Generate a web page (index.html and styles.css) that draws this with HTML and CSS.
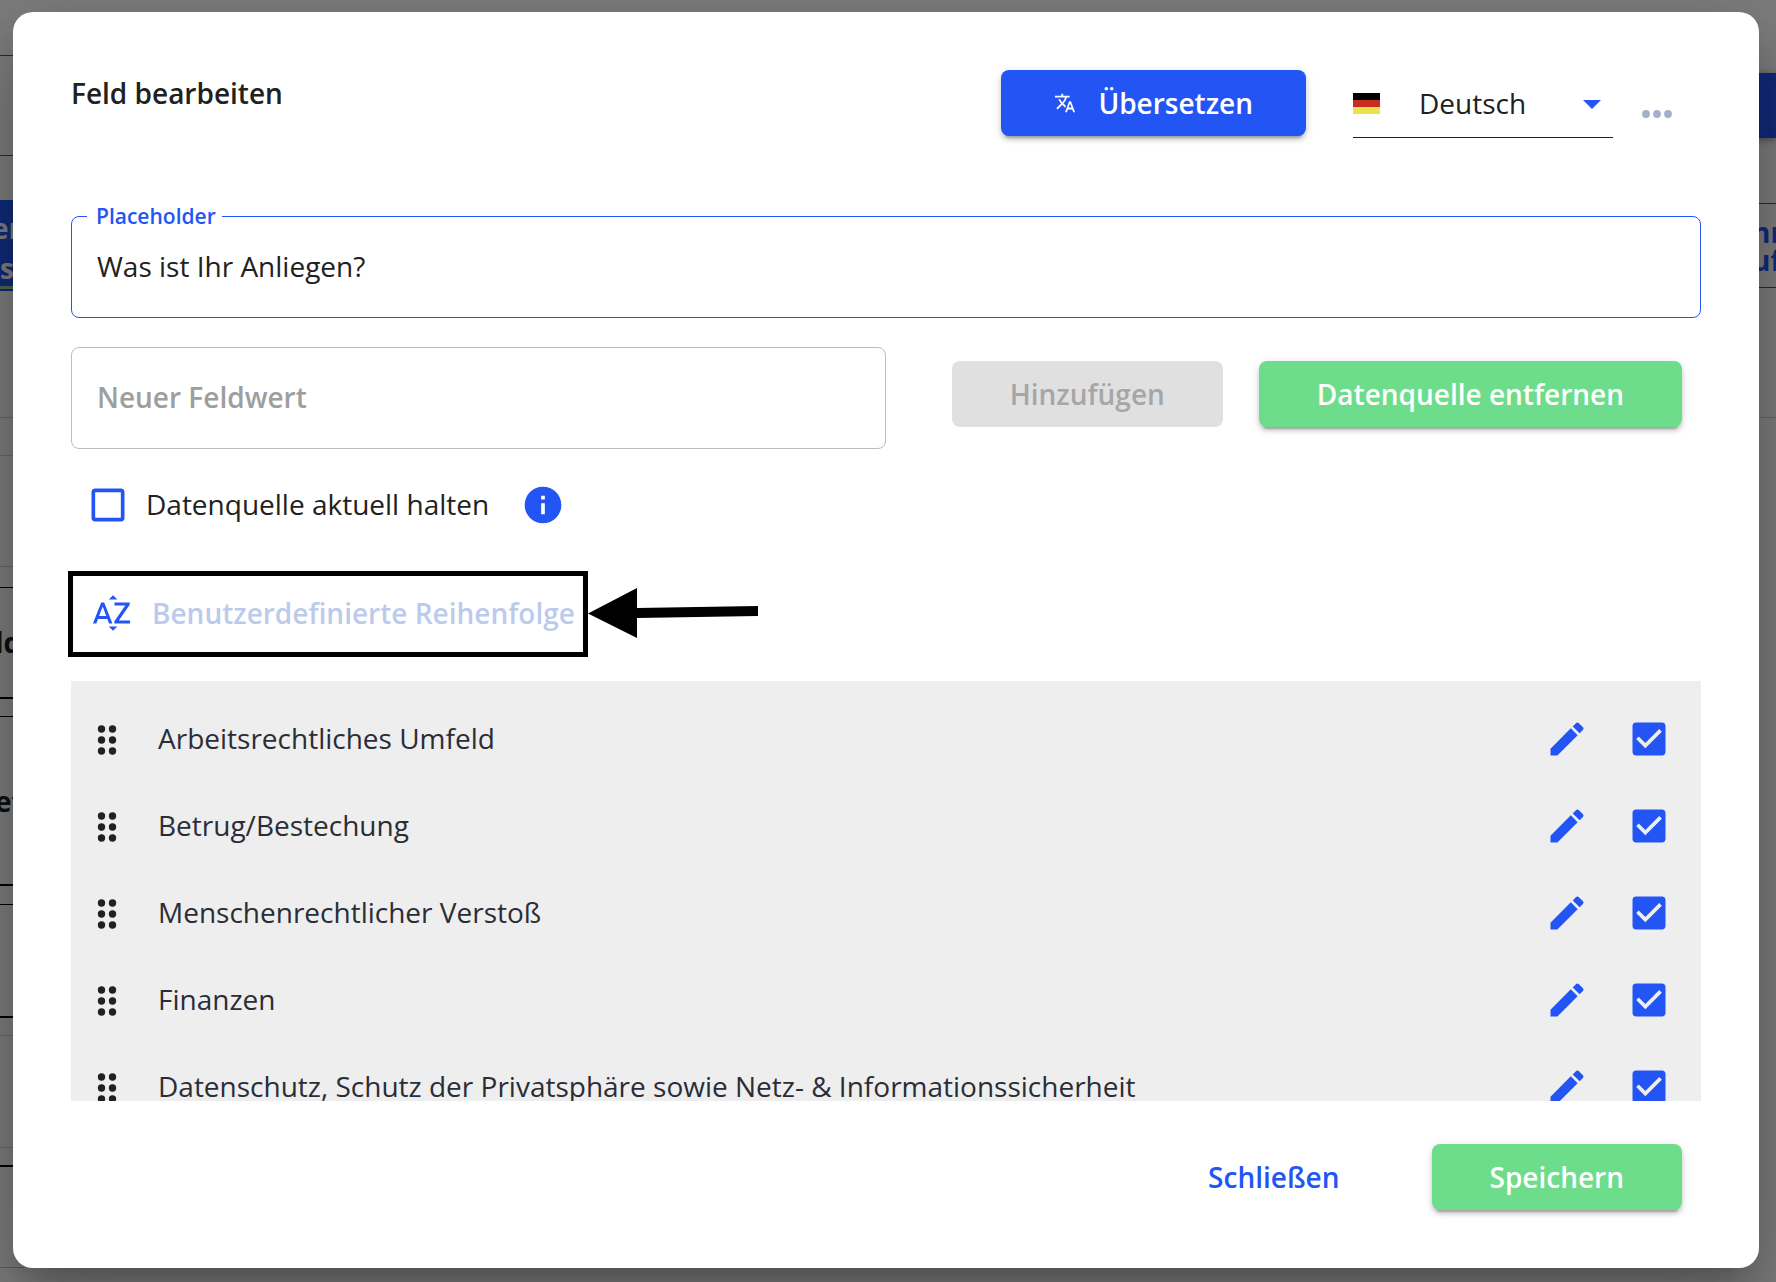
FILE: index.html
```html
<!DOCTYPE html>
<html lang="de">
<head>
<meta charset="utf-8">
<meta name="viewport" content="width=device-width, initial-scale=1">
<title>Feld bearbeiten</title>
<link rel="stylesheet" href="styles.css">
</head>
<body>
<svg class="sprite" aria-hidden="true">
  <symbol id="icon-drag" viewBox="0 0 24 32">
    <circle cx="6.500" cy="5" r="3.700"/><circle cx="17.500" cy="5" r="3.700"/>
    <circle cx="6.500" cy="16" r="3.700"/><circle cx="17.500" cy="16" r="3.700"/>
    <circle cx="6.500" cy="27" r="3.700"/><circle cx="17.500" cy="27" r="3.700"/>
  </symbol>
  <symbol id="icon-edit" viewBox="0 0 24 24">
    <path d="M3 17.250V21h3.750L17.810 9.940l-3.750-3.750L3 17.250zM20.710 7.040a1 1 0 0 0 0-1.410l-2.340-2.340a1 1 0 0 0-1.410 0l-1.830 1.830 3.750 3.750 1.830-1.830z"/>
  </symbol>
  <symbol id="icon-checked" viewBox="0 0 24 24">
    <path d="M19 3H5a2 2 0 0 0-2 2v14a2 2 0 0 0 2 2h14a2 2 0 0 0 2-2V5a2 2 0 0 0-2-2zm-9 14l-5-5 1.410-1.410L10 14.170l7.590-7.590L19 8l-9 9z"/>
  </symbol>
  <symbol id="icon-unchecked" viewBox="0 0 24 24">
    <path d="M19 5v14H5V5h14m0-2H5a2 2 0 0 0-2 2v14a2 2 0 0 0 2 2h14a2 2 0 0 0 2-2V5a2 2 0 0 0-2-2z"/>
  </symbol>
</svg>

<div class="page" aria-hidden="true">
  <div class="edge edge-left">
    <div class="left-title"></div>
    <div class="left-tab">er<br>st</div>
    <div class="left-gap"></div>
    <div class="left-card card-first">ld</div>
    <div class="left-card card-second">ef</div>
    <div class="left-card card-third"></div>
    <div class="left-card card-fourth"></div>
    <div class="left-rest"></div>
  </div>
  <div class="edge edge-right">
    <div class="right-button"></div>
    <div class="right-tab">hr<br>ufu</div>
    <div class="right-line"></div>
  </div>
</div>

<div class="backdrop">
  <main class="dialog" role="dialog" aria-labelledby="dialog-title">
    <header class="dialog-header">
      <h1 class="dialog-title" id="dialog-title">Feld bearbeiten</h1>
      <button class="button button-primary" type="button">
        <svg class="translate-icon" viewBox="0 0 24 24" aria-hidden="true"><path d="M12.870 15.070l-2.540-2.510.030-.030A17.520 17.520 0 0 0 14.070 6H17V4h-7V2H8v2H1v1.990h11.170C11.500 7.920 10.440 9.750 9 11.350 8.070 10.320 7.300 9.190 6.690 8h-2c.730 1.630 1.730 3.170 2.980 4.560l-5.090 5.020L4 19l5-5 3.110 3.110.760-2.040zM18.500 10h-2L12 22h2l1.120-3h4.750L21 22h2l-4.500-12zm-2.620 7l1.620-4.330L19.120 17h-3.240z"/></svg>
        Übersetzen
      </button>
      <div class="language">
        <svg class="flag" viewBox="0 0 27 21" aria-hidden="true"><path fill="#000" d="M0 0h27v7H0z"/><path fill="#c92d22" d="M0 7h27v7H0z"/><path fill="#ebe24c" d="M0 14h27v7H0z"/></svg>
        <select class="language-select" aria-label="Sprache"><option>Deutsch</option><option>English</option></select>
        <svg class="language-arrow" viewBox="0 0 18 9" aria-hidden="true"><path d="M0 0h18l-9 9z"/></svg>
      </div>
      <button class="more" type="button" aria-label="Mehr">
        <svg viewBox="0 0 30 8" aria-hidden="true"><circle cx="4" cy="4" r="3.900"/><circle cx="15" cy="4" r="3.900"/><circle cx="26" cy="4" r="3.900"/></svg>
      </button>
    </header>

    <div class="field field-active">
      <label class="field-label" for="placeholder">Placeholder</label>
      <input class="field-input" id="placeholder" type="text" value="Was ist Ihr Anliegen?">
    </div>

    <div class="new-value">
      <div class="field">
        <input class="field-input" type="text" placeholder="Neuer Feldwert" aria-label="Neuer Feldwert">
      </div>
      <div class="new-value-actions">
        <button class="button button-disabled" type="button" disabled>Hinzufügen</button>
        <button class="button button-success" type="button">Datenquelle entfernen</button>
      </div>
    </div>

    <div class="keep-current">
      <span class="checkbox">
        <input type="checkbox" id="keep">
        <svg class="icon icon-off" aria-hidden="true"><use href="#icon-unchecked"/></svg>
        <svg class="icon icon-on" aria-hidden="true"><use href="#icon-checked"/></svg>
      </span>
      <label class="keep-label" for="keep">Datenquelle aktuell halten</label>
      <svg class="icon info" viewBox="0 0 24 24" role="img" aria-label="Info"><circle cx="12" cy="12" r="10"/><path fill="#fff" d="M11 7h2v2h-2zM11 11h2v6h-2z"/></svg>
    </div>

    <div class="sort">
      <button class="sort-button" type="button">
        <svg class="icon" viewBox="0 0 24 24" aria-hidden="true"><path d="M14.940 4.660h-4.720l2.360-2.360zm-4.690 14.710h4.660l-2.330 2.330zM6.100 6.270L1.600 17.730h1.840l.920-2.450h5.110l.920 2.450h1.840L7.740 6.270H6.100zm-1.130 7.370l1.940-5.180 1.940 5.180H4.970zm10.760 2.500h6.120v1.590h-8.530v-1.290l5.920-8.560h-5.880v-1.600h8.300v1.260l-5.930 8.600z"/></svg>
        Benutzerdefinierte Reihenfolge
      </button>
      <span class="marker-frame"></span>
      <svg class="marker-arrow" viewBox="0 0 170 50" aria-hidden="true"><path d="M0 25.500L49 0v20l121-2v10L49 30v20z"/></svg>
    </div>

    <ul class="values">
      <li class="value">
        <svg class="drag" aria-hidden="true"><use href="#icon-drag"/></svg>
        <label class="value-name" for="v1">Arbeitsrechtliches Umfeld</label>
        <button class="icon-button" type="button" aria-label="Bearbeiten"><svg class="icon" aria-hidden="true"><use href="#icon-edit"/></svg></button>
        <span class="checkbox"><input type="checkbox" id="v1" checked><svg class="icon icon-off" aria-hidden="true"><use href="#icon-unchecked"/></svg><svg class="icon icon-on" aria-hidden="true"><use href="#icon-checked"/></svg></span>
      </li>
      <li class="value">
        <svg class="drag" aria-hidden="true"><use href="#icon-drag"/></svg>
        <label class="value-name" for="v2">Betrug/Bestechung</label>
        <button class="icon-button" type="button" aria-label="Bearbeiten"><svg class="icon" aria-hidden="true"><use href="#icon-edit"/></svg></button>
        <span class="checkbox"><input type="checkbox" id="v2" checked><svg class="icon icon-off" aria-hidden="true"><use href="#icon-unchecked"/></svg><svg class="icon icon-on" aria-hidden="true"><use href="#icon-checked"/></svg></span>
      </li>
      <li class="value">
        <svg class="drag" aria-hidden="true"><use href="#icon-drag"/></svg>
        <label class="value-name" for="v3">Menschenrechtlicher Verstoß</label>
        <button class="icon-button" type="button" aria-label="Bearbeiten"><svg class="icon" aria-hidden="true"><use href="#icon-edit"/></svg></button>
        <span class="checkbox"><input type="checkbox" id="v3" checked><svg class="icon icon-off" aria-hidden="true"><use href="#icon-unchecked"/></svg><svg class="icon icon-on" aria-hidden="true"><use href="#icon-checked"/></svg></span>
      </li>
      <li class="value">
        <svg class="drag" aria-hidden="true"><use href="#icon-drag"/></svg>
        <label class="value-name" for="v4">Finanzen</label>
        <button class="icon-button" type="button" aria-label="Bearbeiten"><svg class="icon" aria-hidden="true"><use href="#icon-edit"/></svg></button>
        <span class="checkbox"><input type="checkbox" id="v4" checked><svg class="icon icon-off" aria-hidden="true"><use href="#icon-unchecked"/></svg><svg class="icon icon-on" aria-hidden="true"><use href="#icon-checked"/></svg></span>
      </li>
      <li class="value">
        <svg class="drag" aria-hidden="true"><use href="#icon-drag"/></svg>
        <label class="value-name" for="v5">Datenschutz, Schutz der Privatsphäre sowie Netz- &amp; Informationssicherheit</label>
        <button class="icon-button" type="button" aria-label="Bearbeiten"><svg class="icon" aria-hidden="true"><use href="#icon-edit"/></svg></button>
        <span class="checkbox"><input type="checkbox" id="v5" checked><svg class="icon icon-off" aria-hidden="true"><use href="#icon-unchecked"/></svg><svg class="icon icon-on" aria-hidden="true"><use href="#icon-checked"/></svg></span>
      </li>
    </ul>

    <footer class="dialog-footer">
      <button class="button button-text" type="button">Schließen</button>
      <button class="button button-success" type="button">Speichern</button>
    </footer>
  </main>
</div>
</body>
</html>
```
FILE: styles.css
```css
:root {
  --blue: #2355f5;
  --green: #6edd8b;
  --text: #212121;
}

* { box-sizing: border-box; }

body {
  margin: 0;
  display: grid;
  min-height: 100vh;
  overflow: hidden;
  background: #fafafa;
  color: var(--text);
  font: 400 28px/40px "Open Sans", "Noto Sans", sans-serif;
}

button, input, select { font: inherit; color: inherit; }
button { cursor: pointer; }
svg { display: block; flex: none; fill: currentColor; }
.sprite { position: absolute; width: 0; height: 0; }

/* Page behind the dialog */
.page, .backdrop { grid-area: 1 / 1; min-width: 0; }
.page {
  display: flex;
  justify-content: space-between;
  max-height: 100vh;
  overflow: hidden;
  font-weight: 700;
}
.edge { display: flex; flex-direction: column; width: 24px; }
.edge > * { flex: none; }
.edge-left { padding-top: 55px; }
.left-title { height: 101px; border: solid var(--blue); border-width: 1px 0; }
.left-tab {
  height: 91px;
  margin-top: 44px;
  padding-top: 8px;
  background: linear-gradient(#0000 86px, #8fd694 86px 89px, #0000 89px) var(--blue);
  color: #fff;
  text-indent: -8px;
}
.left-tab::first-line { line-height: 40px; }
.left-gap { height: 150px; margin-top: 126px; border-bottom: 1px solid #ccc; background: linear-gradient(#ccc 1px, #0000 1px 38px, #ccc 38px 39px, #0000 39px); }
.left-card { border: solid #000; border-width: 1px 0 2px; }
.card-first { height: 112px; margin-top: 20px; padding-top: 34px; text-indent: -5px; }
.card-second { height: 170px; margin-top: 17px; padding-top: 64px; text-indent: -5px; }
.card-third { height: 114px; margin-top: 18px; }
.card-fourth { height: 132px; margin-top: 17px; border-top-color: #ccc; background: linear-gradient(#0000 111px, #ccc 111px 112px, #0000 112px); }
.left-rest { height: 101px; border-bottom: 1px solid #bbb; }
.edge-right { padding-top: 73px; }
.right-button { height: 65px; background: var(--blue); box-shadow: 0 2px 8px #0006; }
.right-tab {
  height: 85px;
  margin-top: 65px;
  padding-top: 14px;
  border: solid var(--blue);
  border-width: 1px 0;
  color: var(--blue);
  line-height: 28px;
}
.right-line { height: 1px; margin-top: 129px; background: #ccc; }

/* Dialog */
.backdrop {
  z-index: 1;
  display: grid;
  padding: 12px 17px 14px 13px;
  background: rgba(0, 0, 0, .5);
}
.dialog {
  display: flex;
  flex-direction: column;
  min-width: 0;
  padding: 58px;
  border-radius: 20px;
  background: #fff;
  box-shadow: 0 22px 30px -14px #0003, 0 48px 76px 6px #00000024, 0 18px 92px 16px #0000001f;
}

.button {
  display: inline-flex;
  align-items: center;
  justify-content: center;
  height: 66px;
  padding: 0 58px;
  border: 0;
  border-radius: 8px;
  font-weight: 600;
  white-space: nowrap;
}
.button-primary, .button-success {
  color: #fff;
  box-shadow: 0 6px 2px -4px #0003, 0 4px 4px #00000024, 0 2px 10px #0000001f;
}
.button-primary { gap: 22px; padding: 0 53px; background: var(--blue); }
.button-success { background: var(--green); }
.button-disabled { background: #e0e0e0; color: #a6a6a6; }
.button-text { padding: 0 46px; background: none; color: var(--blue); }

.dialog-header { display: flex; height: 68px; padding-right: 20px; }
.dialog-title {
  flex: 1;
  margin: 0;
  font-size: 28px;
  line-height: 46px;
  font-weight: 600;
}
.translate-icon { width: 22px; height: 22px; }

.language { display: grid; align-items: center; width: 260px; margin: 0 20px 0 47px; }
.language > * { grid-area: 1 / 1; }
.language-select {
  appearance: none;
  width: 100%;
  height: 68px;
  padding: 0 40px 2px 66px;
  border: 0;
  border-bottom: 1px solid var(--text);
  border-radius: 0;
  background: none;
}
.flag { width: 27px; height: 21px; margin-bottom: 2px; }
.language-arrow { justify-self: end; width: 18px; height: 9px; margin-right: 12px; color: var(--blue); pointer-events: none; }
.more {
  display: grid;
  place-items: center;
  align-self: flex-end;
  width: 48px;
  height: 48px;
  padding: 0;
  border: 0;
  background: none;
  color: #a2b0d0;
}
.more svg { width: 30px; height: 8px; }

.field { position: relative; border: 1px solid #bdbdbd; border-radius: 8px; }
.field-active { margin-top: 78px; border-color: var(--blue); }
.field-input {
  display: block;
  width: 100%;
  height: 100px;
  padding: 0 25px 2px;
  border: 0;
  border-radius: 8px;
  outline: 0;
  background: none;
}
.field-input::placeholder { color: #9e9e9e; font-weight: 600; opacity: 1; }
.field-label {
  position: absolute;
  top: -14px;
  left: 15px;
  padding: 0 6px 0 9px;
  background: #fff;
  color: var(--blue);
  font-size: 21px;
  line-height: 26px;
  font-weight: 600;
}

.new-value { display: grid; grid-template-columns: 1fr 1fr; margin-top: 29px; }
.new-value-actions { display: flex; justify-content: flex-end; gap: 36px; padding: 14px 19px 0 0; }

.icon { width: 44px; height: 44px; color: var(--blue); }
.checkbox { display: grid; flex: none; color: var(--blue); }
.checkbox > * { grid-area: 1 / 1; }
.checkbox input { width: 44px; height: 44px; margin: 0; opacity: 0; cursor: pointer; }
.checkbox .icon { pointer-events: none; }
.checkbox input:checked ~ .icon-off,
.checkbox input:not(:checked) ~ .icon-on { visibility: hidden; }

.keep-current { display: flex; align-items: center; gap: 16px; margin-top: 34px; padding-left: 15px; }
.keep-label, .value-name { padding-bottom: 2px; }
.info { margin-left: 16px; }

.sort { position: relative; display: flex; margin-top: 61px; padding-left: 19px; }
.sort-button {
  display: flex;
  align-items: center;
  gap: 18px;
  height: 50px;
  padding: 0;
  border: 0;
  background: none;
  color: #bccbec;
  font-weight: 600;
  white-space: nowrap;
}
.marker-frame { position: absolute; top: -17px; left: -3px; width: 520px; height: 86px; border: 5px solid #000; pointer-events: none; }
.marker-arrow { position: absolute; top: 0; left: 517px; width: 170px; height: 50px; color: #000; }

.values {
  height: 420px;
  margin: 43px 0 0;
  padding: 14px 30px 14px 24px;
  overflow-y: auto;
  scrollbar-width: none;
  background: #eee;
  color: #2b2d36;
  list-style: none;
}
.value { display: flex; align-items: center; height: 87px; }
.drag { width: 24px; height: 32px; margin-top: 2px; color: var(--text); }
.value-name { flex: 1; padding-left: 39px; }
.icon-button { margin-right: 38px; padding: 0; border: 0; background: none; }

.dialog-footer { display: flex; justify-content: flex-end; gap: 46px; margin-top: 43px; padding-right: 19px; }
```
